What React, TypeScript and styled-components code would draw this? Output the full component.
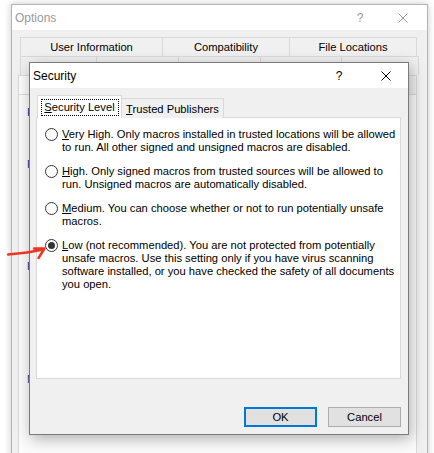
import React, { FunctionComponent } from 'react';
import styled, { createGlobalStyle } from 'styled-components';

const GlobalStyle = createGlobalStyle`
  html, body {
    margin: 0;
    padding: 0;
    background: #ffffff;
  }

  body {
    font-family: 'Liberation Sans', Arial, sans-serif;
    font-size: 11.2px;
    color: #000000;
  }
`;

const Stage = styled.div`
  position: relative;
  width: 434px;
  height: 453px;
  overflow: hidden;
  padding: 4px 0 0 11px;
  box-sizing: border-box;
`;

/* ---- Options window (behind) ---- */

const OptionsWindow = styled.div`
  width: 417px;
  height: 470px;
  box-sizing: border-box;
  border: 1px solid #b4b4b4;
  background: #f0f0f0;
  box-shadow: 0 0 7px rgba(0, 0, 0, 0.22);
  display: flex;
  flex-direction: column;
`;

const TitleBar = styled.div<{ $inactive?: boolean }>`
  height: 25px;
  flex: none;
  display: flex;
  align-items: center;
  background: #ffffff;
  padding-left: 3px;
  color: ${p => (p.$inactive ? '#9a9a9a' : '#000000')};
  font-size: 12px;
`;

const TitleText = styled.span`
  flex: 1;
`;

const HelpGlyph = styled.span<{ $right: number }>`
  width: 10px;
  text-align: center;
  margin-right: ${p => p.$right}px;
  font-size: 12px;
`;

const CloseGlyph = styled.svg<{ $right: number }>`
  width: 10px;
  height: 10px;
  margin-right: ${p => p.$right}px;
`;

const OptionsBody = styled.div`
  padding: 7px 10px 0 6px;
  display: flex;
  flex-direction: column;
`;

const TabRow = styled.div<{ $cols: string; $inset: number }>`
  display: grid;
  grid-template-columns: ${p => p.$cols};
  margin: 0 ${p => p.$inset}px;
  height: 19px;
`;

const RowTab = styled.div<{ $selected?: boolean }>`
  border: 1px solid #d9d9d9;
  border-bottom: none;
  margin-left: -1px;
  display: flex;
  align-items: center;
  justify-content: center;
  background: ${p => (p.$selected ? '#fbfbfb' : '#f0f0f0')};
  white-space: nowrap;
  overflow: hidden;
  &:first-child {
    margin-left: 0;
  }
`;

const OptionsPanel = styled.div`
  height: 360px;
  border: 1px solid #d9d9d9;
  background: #fbfbfb;
  padding: 11px 0 0 8px;
`;

const GroupHeading = styled.div<{ $gap: number }>`
  margin-top: ${p => p.$gap}px;
  line-height: 13px;
  color: #1e3a8c;
`;

/* ---- Security dialog (front) ---- */

const Dialog = styled.div`
  position: absolute;
  left: 29px;
  top: 62px;
  width: 380px;
  height: 373px;
  box-sizing: border-box;
  border: 1px solid #7a7a7a;
  background: #f0f0f0;
  box-shadow: 2px 4px 14px rgba(0, 0, 0, 0.3);
  display: flex;
  flex-direction: column;
`;

const DialogBody = styled.div`
  flex: 1;
  padding: 7px 7px 7px 6px;
  display: flex;
  flex-direction: column;
`;

const TabStrip = styled.div`
  display: flex;
  align-items: flex-end;
  margin-left: 1px;
  height: 23px;
  position: relative;
  z-index: 1;
  margin-bottom: -1px;
`;

const ActiveTab = styled.div`
  width: 85px;
  height: 23px;
  box-sizing: border-box;
  border: 1px solid #d9d9d9;
  border-bottom: none;
  background: #ffffff;
  display: flex;
  align-items: center;
  justify-content: center;
`;

const FocusBox = styled.span`
  width: 78px;
  height: 17px;
  box-sizing: border-box;
  border: 1px dotted #000000;
  display: flex;
  align-items: center;
  justify-content: center;
`;

const Tab = styled.div`
  width: 102px;
  height: 20px;
  box-sizing: border-box;
  border: 1px solid #d9d9d9;
  border-left: none;
  border-bottom: none;
  background: #f0f0f0;
  display: flex;
  align-items: center;
  justify-content: center;
`;

const Panel = styled.div`
  height: 262px;
  box-sizing: border-box;
  border: 1px solid #d9d9d9;
  background: #ffffff;
  padding: 10px 8px 0 8px;
`;

const Option = styled.div`
  display: flex;
  gap: 4px;
  margin-bottom: 11px;
`;

const Radio = styled.span<{ $checked?: boolean }>`
  flex: none;
  width: 13px;
  height: 13px;
  box-sizing: border-box;
  border: 1px solid #333333;
  border-radius: 50%;
  background: #ffffff;
  display: flex;
  align-items: center;
  justify-content: center;
  &::after {
    content: '';
    width: 7px;
    height: 7px;
    border-radius: 50%;
    background: ${p => (p.$checked ? '#333333' : 'transparent')};
  }
`;

const OptionText = styled.div`
  line-height: 13px;
`;

const Line = styled.div`
  white-space: nowrap;
`;

const ButtonRow = styled.div`
  margin-top: auto;
  display: flex;
  justify-content: flex-end;
  gap: 11px;
`;

const Button = styled.div<{ $default?: boolean }>`
  width: 73px;
  height: 20px;
  box-sizing: border-box;
  border: ${p => (p.$default ? '2px solid #0078d7' : '1px solid #adadad')};
  background: #e1e1e1;
  display: flex;
  align-items: center;
  justify-content: center;
`;

const Arrow = styled.svg`
  position: absolute;
  left: 0;
  top: 240px;
  width: 60px;
  height: 24px;
  overflow: visible;
`;

type OptionProps = {
  lines: string[];
  checked?: boolean;
};

// first character of the first line is the access key
const SecurityOption: FunctionComponent<OptionProps> = ({ lines, checked }) => (
  <Option>
    <Radio $checked={checked} />
    <OptionText>
      {lines.map((line, i) => (
        <Line key={i}>
          {i === 0 ? (
            <>
              <u>{line[0]}</u>
              {line.slice(1)}
            </>
          ) : (
            line
          )}
        </Line>
      ))}
    </OptionText>
  </Option>
);

const Close = ({ right, color }: { right: number; color: string }) => (
  <CloseGlyph $right={right} viewBox="0 0 10 10">
    <path d="M0.5 0.5 L9.5 9.5 M9.5 0.5 L0.5 9.5" stroke={color} strokeWidth="1" />
  </CloseGlyph>
);

const App: FunctionComponent = () => {
  return (
    <>
      <GlobalStyle />
      <Stage>
        <OptionsWindow>
          <TitleBar $inactive>
            <TitleText>Options</TitleText>
            <HelpGlyph $right={33}>?</HelpGlyph>
            <Close right={19} color="#9a9a9a" />
          </TitleBar>
          <OptionsBody>
            <TabRow $cols="143px 127px 127px" $inset={2}>
              <RowTab>User Information</RowTab>
              <RowTab>Compatibility</RowTab>
              <RowTab>File Locations</RowTab>
            </TabRow>
            {/* lower tab rows sit under the Security dialog */}
            <TabRow $cols="77px 82px 82px 81px 77px" $inset={2}>
              <RowTab />
              <RowTab />
              <RowTab />
              <RowTab />
              <RowTab />
            </TabRow>
            <TabRow $cols="100px 160px 139px" $inset={0}>
              <RowTab $selected />
              <RowTab />
              <RowTab />
            </TabRow>
            <OptionsPanel>
              <GroupHeading $gap={0}>File encryption options for this document</GroupHeading>
              <GroupHeading $gap={39}>File sharing options for this document</GroupHeading>
              <GroupHeading $gap={89}>Privacy options</GroupHeading>
              <GroupHeading $gap={100}>Macro security</GroupHeading>
            </OptionsPanel>
          </OptionsBody>
        </OptionsWindow>

        <Dialog>
          <TitleBar>
            <TitleText>Security</TitleText>
            <HelpGlyph $right={37}>?</HelpGlyph>
            <Close right={17} color="#000000" />
          </TitleBar>
          <DialogBody>
            <TabStrip>
              <ActiveTab>
                <FocusBox>
                  <u>S</u>ecurity Level
                </FocusBox>
              </ActiveTab>
              <Tab>
                <span>
                  <u>T</u>rusted Publishers
                </span>
              </Tab>
            </TabStrip>
            <Panel>
              <SecurityOption
                lines={[
                  'Very High. Only macros installed in trusted locations will be allowed',
                  'to run. All other signed and unsigned macros are disabled.',
                ]}
              />
              <SecurityOption
                lines={[
                  'High. Only signed macros from trusted sources will be allowed to',
                  'run. Unsigned macros are automatically disabled.',
                ]}
              />
              <SecurityOption
                lines={[
                  'Medium. You can choose whether or not to run potentially unsafe',
                  'macros.',
                ]}
              />
              <SecurityOption
                checked
                lines={[
                  'Low (not recommended). You are not protected from potentially',
                  'unsafe macros. Use this setting only if you have virus scanning',
                  'software installed, or you have checked the safety of all documents',
                  'you open.',
                ]}
              />
            </Panel>
            <ButtonRow>
              <Button $default>OK</Button>
              <Button>Cancel</Button>
            </ButtonRow>
          </DialogBody>
        </Dialog>

        {/* hand-drawn pointer to the Low option */}
        <Arrow viewBox="0 240 60 24">
          <path
            d="M8 254.5 C 20 253.5, 32 252, 43 249.5 M34 248.5 L44.5 248.5 L38.5 258"
            fill="none"
            stroke="#ee3322"
            strokeWidth="2.4"
            strokeLinecap="round"
            strokeLinejoin="round"
          />
        </Arrow>
      </Stage>
    </>
  );
};

export default App;
